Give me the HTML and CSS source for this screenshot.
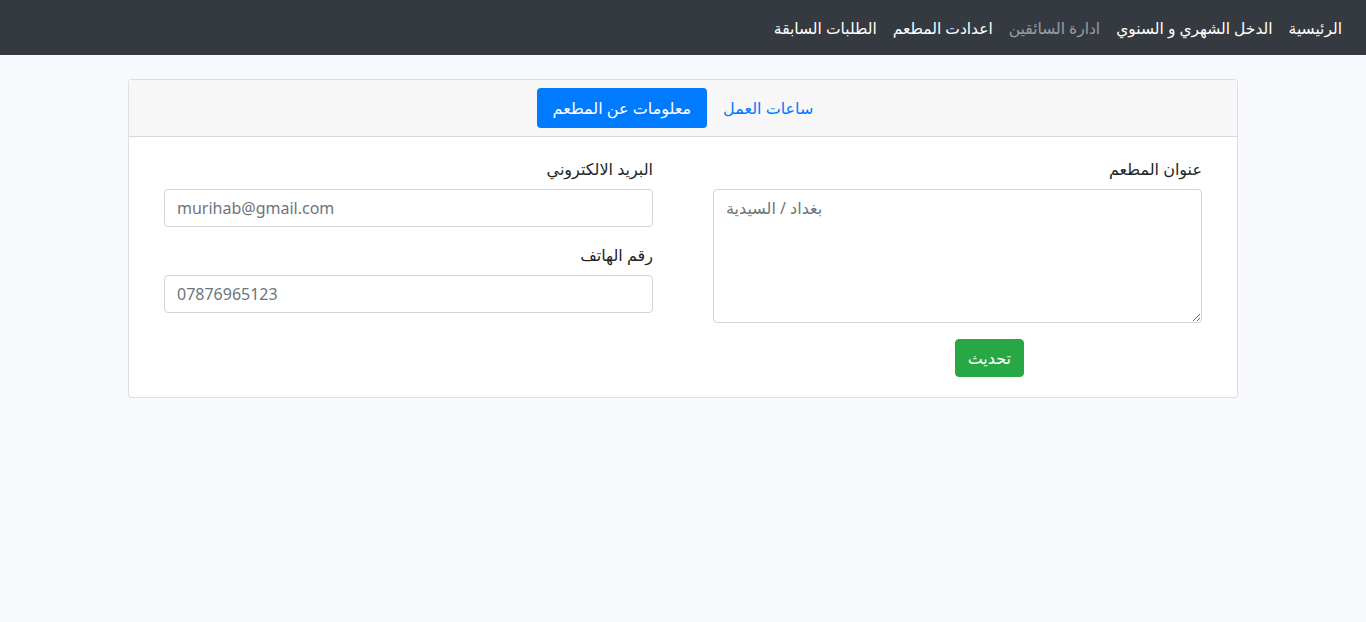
FILE: index.html
```html
<!DOCTYPE html>
<html lang="ar" dir="rtl">
<head>
    <meta charset="UTF-8">
    <meta name="viewport" content="width=device-width, initial-scale=1.0">
    <title>اعدادات المطعم</title>
    <link rel="stylesheet" href="styles.css">
</head>
<body>
    <nav class="navbar">
        <a href="#" class="nav-link">الرئيسية</a>
        <a href="#" class="nav-link">الدخل الشهري و السنوي</a>
        <a href="#" class="nav-link muted">ادارة السائقين</a>
        <a href="#" class="nav-link">اعدادت المطعم</a>
        <a href="#" class="nav-link">الطلبات السابقة</a>
    </nav>

    <div class="container">
        <div class="card">
            <div class="card-header">
                <a href="#" class="pill">ساعات العمل</a>
                <a href="#" class="pill active">معلومات عن المطعم</a>
            </div>
            <div class="card-body">
                <div class="col">
                    <div class="form-group">
                        <label>عنوان المطعم</label>
                        <textarea class="form-control address ltr" placeholder="بغداد / السيدية"></textarea>
                    </div>
                    <button class="btn-update">تحديث</button>
                </div>
                <div class="col">
                    <div class="form-group">
                        <label>البريد الالكتروني</label>
                        <input type="text" class="form-control ltr" placeholder="murihab@gmail.com">
                    </div>
                    <div class="form-group">
                        <label>رقم الهاتف</label>
                        <input type="text" class="form-control ltr" placeholder="07876965123">
                    </div>
                </div>
            </div>
        </div>
    </div>
</body>
</html>
```

FILE: styles.css
```css
body {
    margin: 0;
    font-family: "Segoe UI", "Noto Sans", "DejaVu Sans", sans-serif;
    font-size: 16px;
    line-height: 24px;
    color: #212529;
    background-color: #f8f9fc;
}

/* Navbar */
.navbar {
    background-color: #343a40;
    height: 55px;
    padding: 0 16px;
    display: flex;
    align-items: center;
    box-sizing: border-box;
}

.nav-link {
    padding: 0 8px;
    font-size: 15.5px;
    color: #fff;
    text-decoration: none;
}

.nav-link.muted {
    color: rgba(255, 255, 255, 0.5);
}

/* Card */
.container {
    width: 1110px;
    margin: 24px auto 0;
}

.card {
    background-color: #fff;
    border: 1px solid rgba(0, 0, 0, 0.125);
    border-radius: 4px;
}

.card-header {
    background-color: #f7f7f7;
    border-bottom: 1px solid rgba(0, 0, 0, 0.125);
    padding: 8px 16px;
    display: flex;
    justify-content: center;
}

.pill {
    padding: 8px 16px;
    border-radius: 4px;
    color: #007bff;
    text-decoration: none;
}

.pill.active {
    background-color: #007bff;
    color: #fff;
}

.card-body {
    padding: 20px 35px;
    display: grid;
    grid-template-columns: 1fr 1fr;
    gap: 60px;
}

.form-group {
    margin-bottom: 16px;
}

label {
    display: block;
    margin-bottom: 8px;
}

.form-control {
    display: block;
    width: 100%;
    box-sizing: border-box;
    height: 38px;
    padding: 6px 12px;
    font-family: inherit;
    font-size: 16px;
    line-height: 24px;
    color: #495057;
    border: 1px solid #ced4da;
    border-radius: 4px;
    background-color: #fff;
}

.form-control::placeholder {
    color: #6c757d;
}

.ltr {
    direction: ltr;
    text-align: left;
}

.address {
    height: 134px;
    resize: vertical;
}

.btn-update {
    margin-right: 178px;
    height: 38px;
    padding: 6px 12px;
    font-family: inherit;
    font-size: 16px;
    line-height: 24px;
    color: #fff;
    background-color: #28a745;
    border: 1px solid #28a745;
    border-radius: 4px;
    cursor: pointer;
}
```
